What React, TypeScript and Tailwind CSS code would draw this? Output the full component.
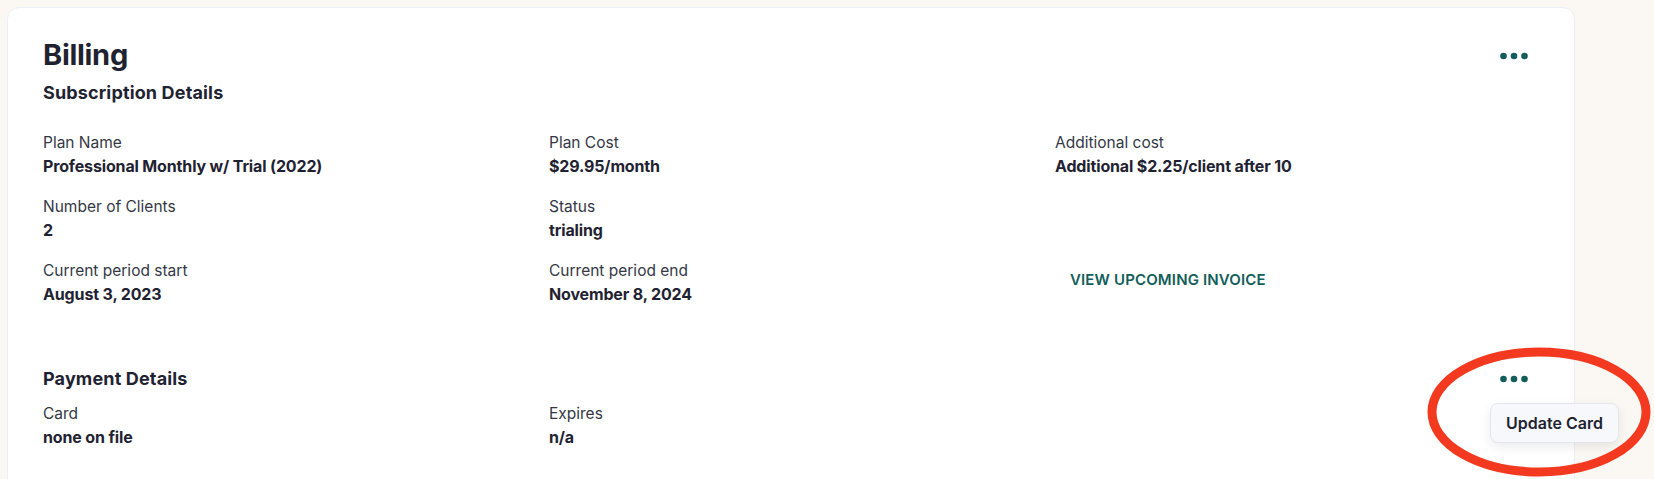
import React from "react";

const Dots = () => (
  <svg width="28" height="8" viewBox="0 0 28 8" aria-hidden="true">
    <circle cx="3.5" cy="4" r="3.3" fill="#135e5a" />
    <circle cx="14" cy="4" r="3.3" fill="#135e5a" />
    <circle cx="24.5" cy="4" r="3.3" fill="#135e5a" />
  </svg>
);

const Field = ({ label, value }: { label: string; value: string }) => (
  <div className="flex flex-col">
    <div className="text-[15.5px] leading-[23px] font-normal text-[#343845]">{label}</div>
    <div className="text-[16px] leading-[25px] font-bold text-[#1f2331] tracking-[-0.15px]">{value}</div>
  </div>
);

export default function App() {
  return (
    <div
      className="relative w-[1654px] h-[479px] overflow-hidden bg-[#fbf8f4] pl-[7px] pt-[7px]"
      style={{ fontFamily: "Inter, 'Noto Sans', sans-serif" }}
    >
      <div className="relative w-[1568px] h-[600px] bg-white rounded-xl border border-[#eceff6] pl-[35px] pt-[30px]">
        {/* Header */}
        <div className="flex items-start justify-between pr-[46px]">
          <div>
            <h1 className="text-[29px] leading-[34px] font-bold text-[#1f2331] tracking-[-0.3px]">Billing</h1>
            <h2 className="mt-[9px] text-[18px] leading-[24px] font-bold text-[#1f2331] tracking-[0.15px]">
              Subscription Details
            </h2>
          </div>
          <button className="mt-[14px] flex items-center">
            <Dots />
          </button>
        </div>

        {/* Subscription grid */}
        <div className="mt-[26px] grid grid-cols-[506px_506px_506px] gap-y-[16px]">
          <Field label="Plan Name" value="Professional Monthly w/ Trial (2022)" />
          <Field label="Plan Cost" value="$29.95/month" />
          <Field label="Additional cost" value="Additional $2.25/client after 10" />
          <Field label="Number of Clients" value="2" />
          <Field label="Status" value="trialing" />
          <div />
          <Field label="Current period start" value="August 3, 2023" />
          <Field label="Current period end" value="November 8, 2024" />
          <div className="flex items-center pb-[6px]">
            <button className="px-[15px] py-[6px] text-[15px] leading-[20px] font-semibold uppercase text-[#135e5a] tracking-[0.15px]">
              View upcoming invoice
            </button>
          </div>
        </div>

        {/* Payment header */}
        <div className="mt-[60px] flex items-center justify-between pr-[46px]">
          <h2 className="text-[18px] leading-[24px] font-bold text-[#1f2331] tracking-[0.15px]">Payment Details</h2>
          <button className="flex items-center">
            <Dots />
          </button>
        </div>

        <div className="mt-[11px] grid grid-cols-[506px_506px_506px]">
          <Field label="Card" value="none on file" />
          <Field label="Expires" value="n/a" />
        </div>

        {/* Popover menu */}
        <div className="absolute left-[1482px] top-[395px] w-[129px] h-[40px] flex items-center justify-center rounded-lg border border-[#e3e6ee] bg-[#f7f8fc] shadow-[0_4px_12px_rgba(0,0,0,0.08)]">
          <span className="text-[16px] font-semibold text-[#1f2331]">Update Card</span>
        </div>
      </div>

      {/* Annotation ellipse */}
      <svg className="absolute left-[1420px] top-[340px]" width="240" height="145" viewBox="0 0 240 145">
        <ellipse cx="119" cy="72" rx="107" ry="60" fill="none" stroke="#f3391f" strokeWidth="9" />
      </svg>
    </div>
  );
}
